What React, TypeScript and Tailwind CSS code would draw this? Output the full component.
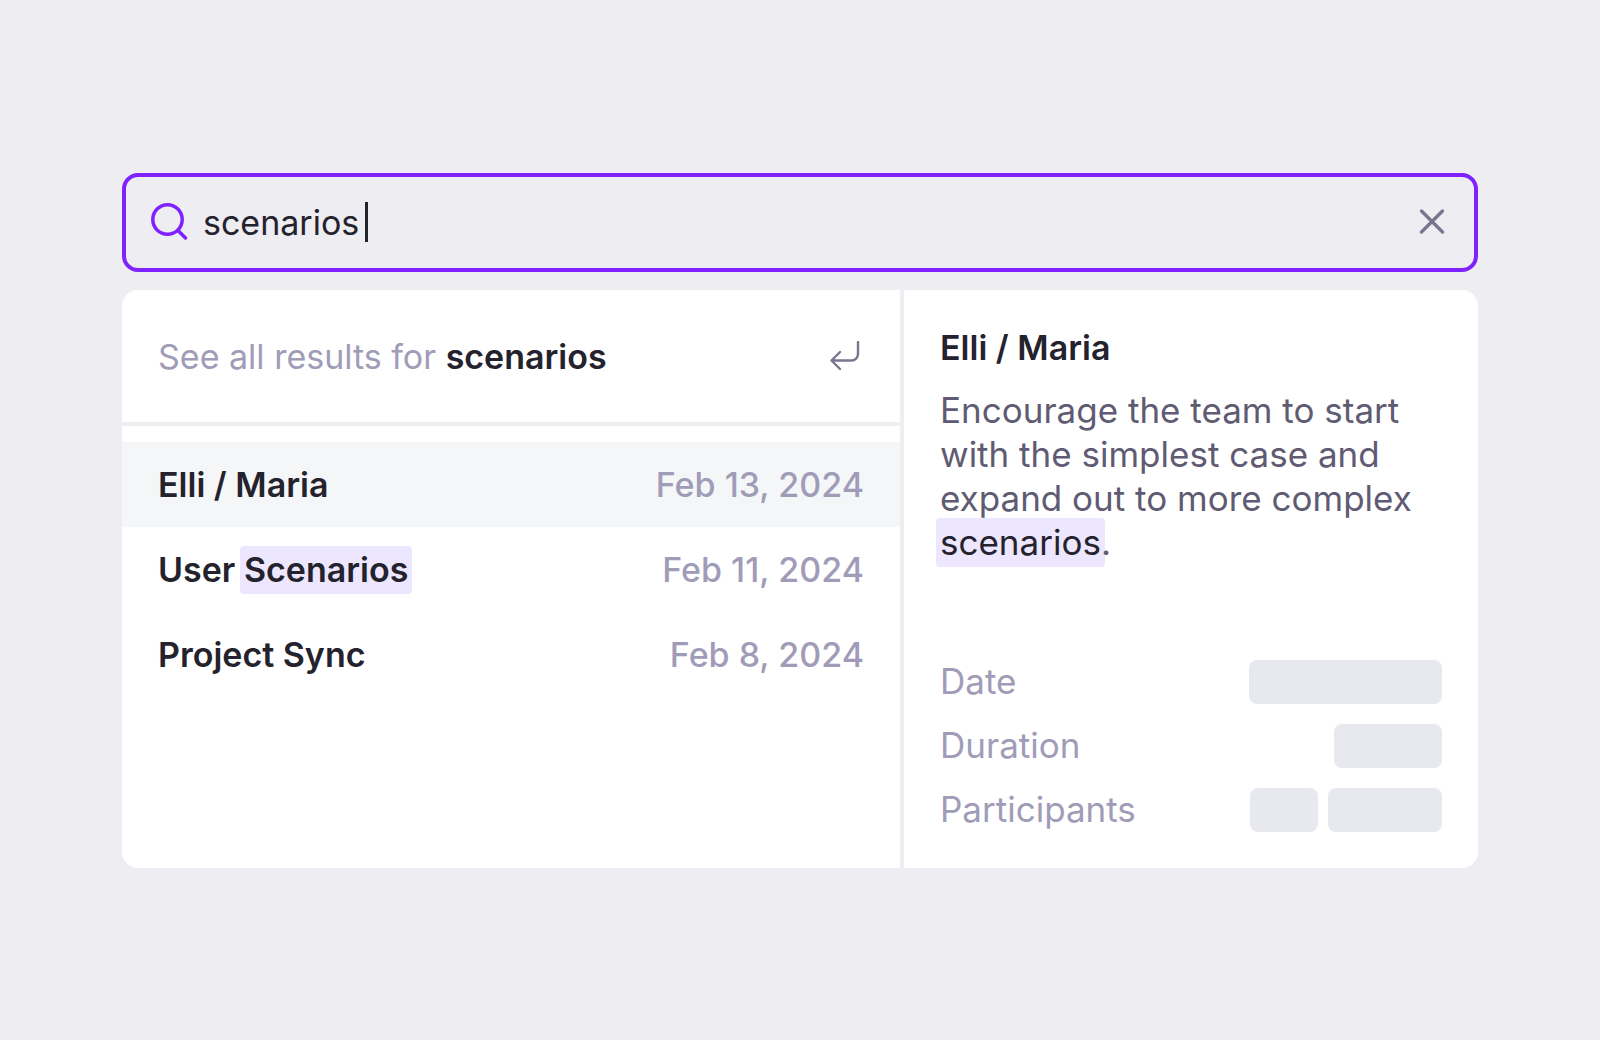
import React, { useState } from "react";

type Meeting = {
  title: string;
  date: string;
};

const meetings: Array<Meeting> = [
  { title: "Elli / Maria", date: "Feb 13, 2024" },
  { title: "User Scenarios", date: "Feb 11, 2024" },
  { title: "Project Sync", date: "Feb 8, 2024" },
];

const SearchIcon = () => (
  <svg className="size-10 shrink-0" viewBox="0 0 40 40" fill="none" stroke="#7f22ff" strokeWidth="3.5" strokeLinecap="round">
    <circle cx="18.5" cy="17.5" r="14.7" />
    <path d="M29 28.500l7.500 7.500" />
  </svg>
);

const CloseIcon = () => (
  <svg className="size-8" viewBox="0 0 32 32" fill="none" stroke="#7a758e" strokeWidth="3.3" strokeLinecap="round">
    <path d="M5.500 5l21 21M26.500 5l-21 21" />
  </svg>
);

const ReturnIcon = () => (
  <svg className="size-8" viewBox="0 0 32 32" fill="none" stroke="#7a758e" strokeWidth="2.4" strokeLinecap="round" strokeLinejoin="round">
    <path d="M28 1v12a6.500 6.500 0 0 1-6.500 6.500H1.500M10 11l-8.500 8.500 8.500 8.500" />
  </svg>
);

const Mark = ({ children }: { children: React.ReactNode }) => (
  <mark className="-mx-1 rounded-sm bg-[#ece7fe] px-1 pt-[3px] pb-1 text-inherit">
    {children}
  </mark>
);

const MeetingTitle = ({ title }: { title: string }) => {
  const at = title.indexOf("Scenarios");
  if (at < 0) return <span>{title}</span>;
  return (
    <span>
      {title.slice(0, at)}
      <Mark>{title.slice(at)}</Mark>
    </span>
  );
};

const Pill = ({ className }: { className: string }) => (
  <span className={`h-11 rounded-lg bg-[#e8e9ef] ${className}`} />
);

const DetailRow = ({ label, children }: { label: string; children: React.ReactNode }) => (
  <div className="flex h-11 items-center justify-between">
    <dt className="pb-0.5 text-[35px] text-[#a09cb8]">{label}</dt>
    <dd className="flex gap-2.5">{children}</dd>
  </div>
);

const App = () => {
  const [query, setQuery] = useState("scenarios");
  const [selected, setSelected] = useState(0);

  return (
    <main className="flex min-h-screen flex-col justify-center bg-[#eeedf2] px-[122px] font-['Inter',sans-serif] text-[34px] leading-11 text-[#24222d]">
      <div className="flex h-[99px] items-center rounded-2xl border-4 border-[#7f22ff] pr-[26px] pl-[23px]">
        <SearchIcon />
        <input
          aria-label="Search"
          className="ml-3.5 field-sizing-content h-12 caret-transparent outline-none"
          value={query}
          onChange={(e) => setQuery(e.target.value)}
        />
        <span className="ml-1.5 h-10 w-[3px] bg-[#24222d]" />
        <button className="ml-auto" aria-label="Clear search" onClick={() => setQuery("")}>
          <CloseIcon />
        </button>
      </div>

      <div className="mt-[18px] grid grid-cols-[782fr_574fr] overflow-hidden rounded-2xl bg-white">
        <section className="border-r-4 border-[#eeedf2]">
          <button className="flex h-[136px] w-full items-center justify-between border-b-4 border-[#eeedf2] pt-0.5 pr-[38px] pl-9 text-left">
            <span className="text-[#a09cb8]">
              See all results for{" "}
              <strong className="font-semibold text-[#24222d]">scenarios</strong>
            </span>
            <ReturnIcon />
          </button>
          <ul className="pt-4">
            {meetings.map((meeting, i) => (
              <li key={meeting.title}>
                <button
                  className={`flex h-[85px] w-full items-center justify-between px-9 pt-0.5 ${
                    i === selected ? "bg-[#f5f6f8]" : "bg-white"
                  }`}
                  onClick={() => setSelected(i)}
                >
                  <span className="font-semibold">
                    <MeetingTitle title={meeting.title} />
                  </span>
                  <span className="font-medium text-[#a09cb8]">{meeting.date}</span>
                </button>
              </li>
            ))}
          </ul>
        </section>

        <section className="p-9">
          <h2 className="font-semibold">Elli / Maria</h2>
          <p className="mt-[18px] text-[35px] text-[#5f5b73]">
            Encourage the team to start with the simplest case and expand out to
            more complex{" "}
            <span className="text-[#24222d]">
              <Mark>scenarios</Mark>
            </span>
            .
          </p>
          <dl className="mt-24 space-y-5">
            <DetailRow label="Date">
              <Pill className="w-[193px]" />
            </DetailRow>
            <DetailRow label="Duration">
              <Pill className="w-[108px]" />
            </DetailRow>
            <DetailRow label="Participants">
              <Pill className="w-[68px]" />
              <Pill className="w-[114px]" />
            </DetailRow>
          </dl>
        </section>
      </div>
    </main>
  );
};

export default App;
